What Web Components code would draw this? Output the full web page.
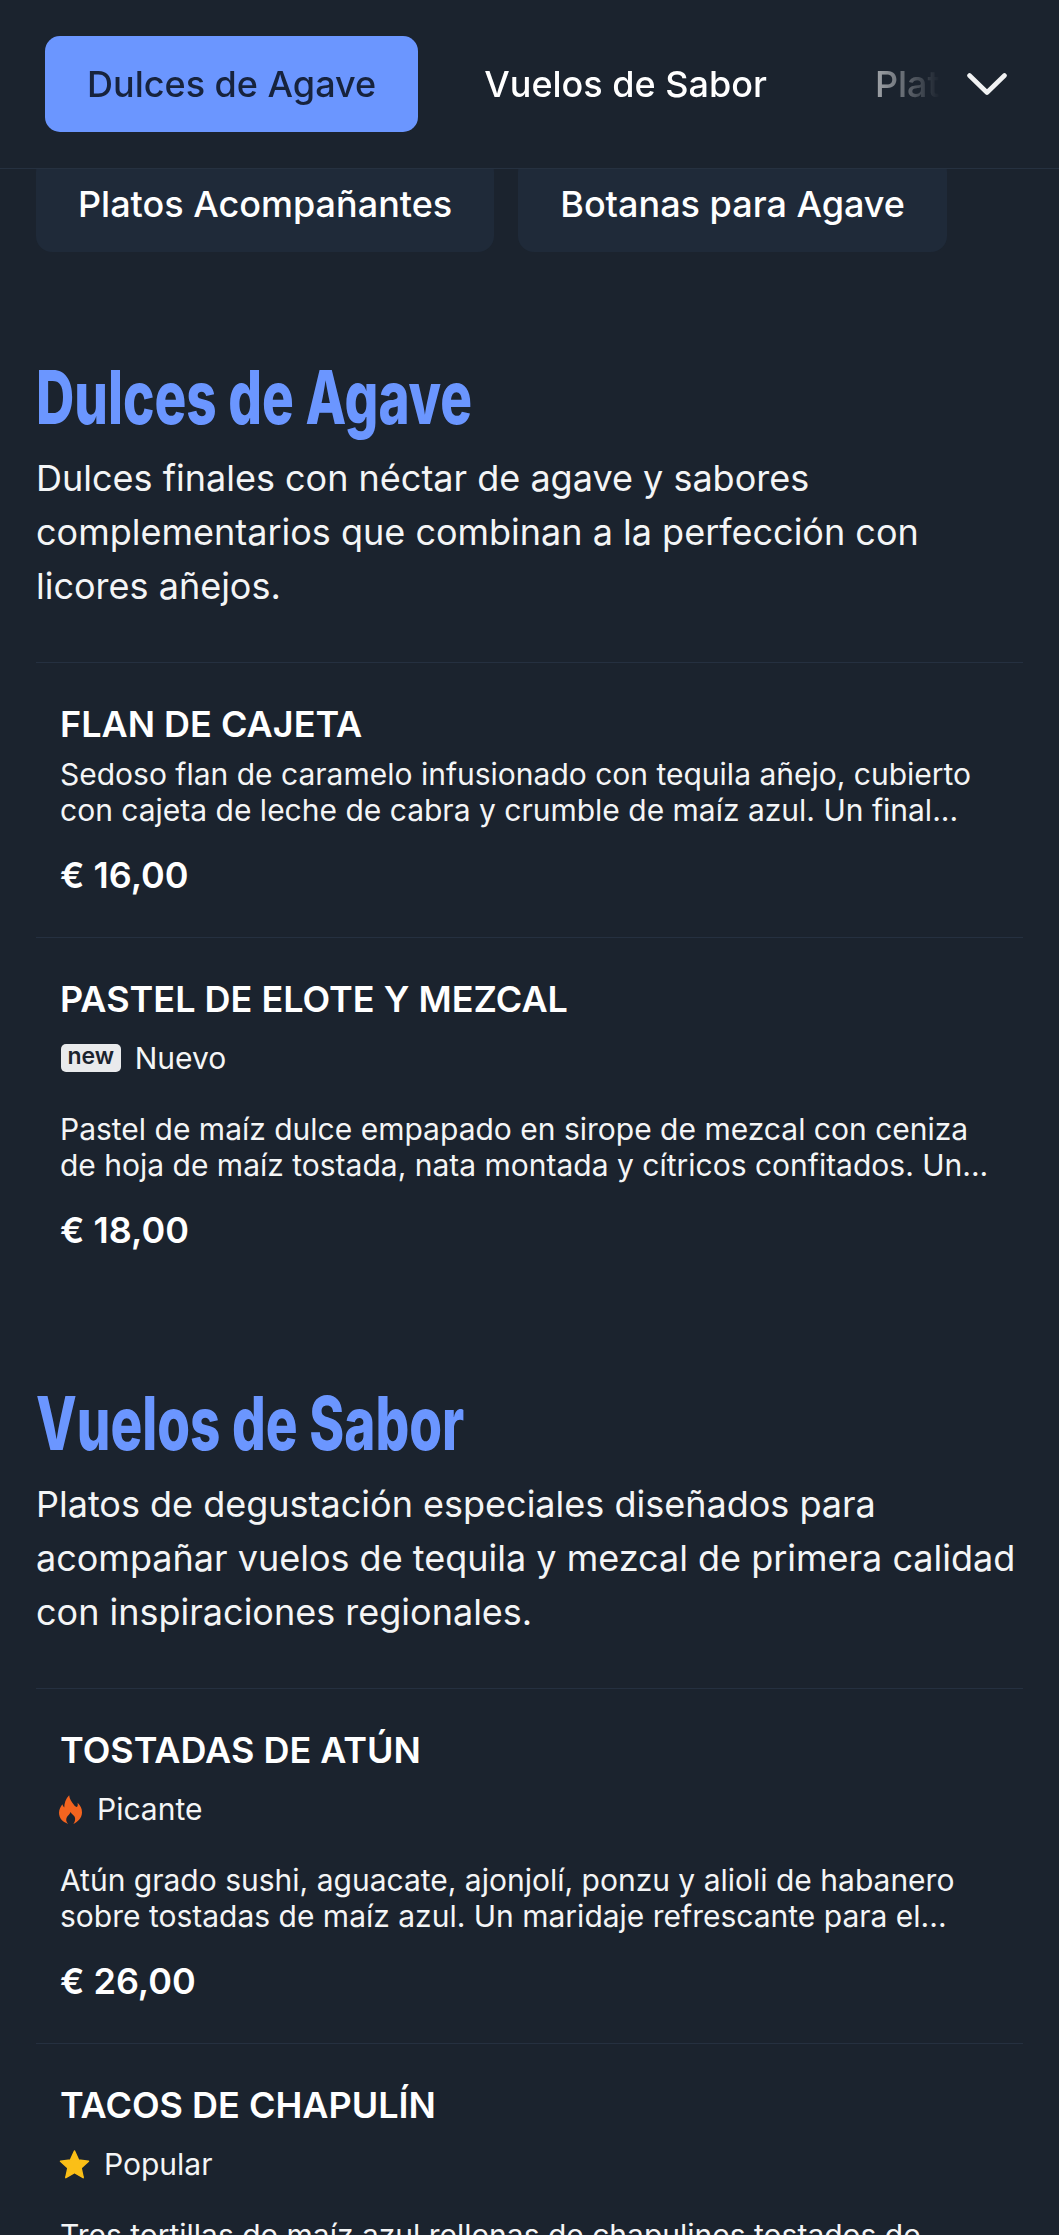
<!DOCTYPE html>
<html lang="es">
<head>
<meta charset="utf-8">
<title>Menu</title>
<style>
  html, body { margin: 0; padding: 0; background: #1b232e; }
  body { height: 2235px; overflow: hidden; font-family: Inter, "Noto Sans", sans-serif; color: #fff; }
</style>
</head>
<body>
<menu-tabs>
  <tab-link active>Dulces de Agave</tab-link>
  <tab-link>Vuelos de Sabor</tab-link>
  <tab-link>Platos Acompañantes</tab-link>
</menu-tabs>
<menu-chips>
  <menu-chip>Platos Acompañantes</menu-chip>
  <menu-chip>Botanas para Agave</menu-chip>
</menu-chips>
<menu-section heading="Dulces de Agave" description="Dulces finales con néctar de agave y sabores complementarios que combinan a la perfección con licores añejos.">
  <menu-item name="FLAN DE CAJETA" price="€ 16,00" text="Sedoso flan de caramelo infusionado con tequila añejo, cubierto con cajeta de leche de cabra y crumble de maíz azul. Un final..."></menu-item>
  <menu-item name="PASTEL DE ELOTE Y MEZCAL" price="€ 18,00" text="Pastel de maíz dulce empapado en sirope de mezcal con ceniza de hoja de maíz tostada, nata montada y cítricos confitados. Un...">
    <item-tag kind="new">Nuevo</item-tag>
  </menu-item>
</menu-section>
<menu-section heading="Vuelos de Sabor" description="Platos de degustación especiales diseñados para acompañar vuelos de tequila y mezcal de primera calidad con inspiraciones regionales.">
  <menu-item name="TOSTADAS DE ATÚN" price="€ 26,00" text="Atún grado sushi, aguacate, ajonjolí, ponzu y alioli de habanero sobre tostadas de maíz azul. Un maridaje refrescante para el...">
    <item-tag kind="hot">Picante</item-tag>
  </menu-item>
  <menu-item name="TACOS DE CHAPULÍN" text="Tres tortillas de maíz azul rellenas de chapulines tostados de">
    <item-tag kind="star">Popular</item-tag>
  </menu-item>
</menu-section>

<script>
const tabsTemplate = document.createElement('template')
tabsTemplate.innerHTML = `
<style>
  :host { display: flex; align-items: center; height: 168px; border-bottom: 1px solid #263140; box-sizing: content-box; }
  .scroller { flex: 1; display: flex; gap: 24px; padding-left: 45px; overflow: hidden; min-width: 0; white-space: nowrap;
    -webkit-mask-image: linear-gradient(to right, #000 830px, transparent 940px); mask-image: linear-gradient(to right, #000 830px, transparent 940px); }
  .toggle { flex: none; width: 40px; height: 22px; margin-right: 52px; }
  svg { display: block; }
</style>
<div class="scroller"><slot></slot></div>
<div class="toggle">
  <svg width="40" height="22" viewBox="0 0 40 22" fill="none" stroke="#f1f2f3" stroke-width="4.600" stroke-linecap="round" stroke-linejoin="round"><path d="M2.500 2.500 20 19.500 37.500 2.500"/></svg>
</div>`
class MenuTabs extends HTMLElement {
  constructor () {
    super()
    this.attachShadow({ mode: 'open' }).appendChild(tabsTemplate.content.cloneNode(true))
  }
}
customElements.define('menu-tabs', MenuTabs)

const tabTemplate = document.createElement('template')
tabTemplate.innerHTML = `
<style>
  :host { display: flex; flex: none; align-items: center; height: 96px; padding: 0 42px; border-radius: 15px; font: 500 36px/1 Inter, sans-serif; color: #fff; box-sizing: border-box; }
  :host([active]) { background: #6b96ff; color: #17233d; }
</style>
<slot></slot>`
class TabLink extends HTMLElement {
  constructor () {
    super()
    this.attachShadow({ mode: 'open' }).appendChild(tabTemplate.content.cloneNode(true))
  }
}
customElements.define('tab-link', TabLink)

const chipsTemplate = document.createElement('template')
chipsTemplate.innerHTML = `
<style>
  :host { display: flex; align-items: flex-end; gap: 24px; height: 83px; padding: 0 0 11px 36px; overflow: hidden; }
</style>
<slot></slot>`
class MenuChips extends HTMLElement {
  constructor () {
    super()
    this.attachShadow({ mode: 'open' }).appendChild(chipsTemplate.content.cloneNode(true))
  }
}
customElements.define('menu-chips', MenuChips)

const chipTemplate = document.createElement('template')
chipTemplate.innerHTML = `
<style>
  :host { display: flex; flex: none; align-items: center; height: 96px; padding: 0 42px; background: #1f2a39; border-radius: 16px; font: 500 36px/1 Inter, sans-serif; color: #fff; box-sizing: border-box; }
</style>
<slot></slot>`
class MenuChip extends HTMLElement {
  constructor () {
    super()
    this.attachShadow({ mode: 'open' }).appendChild(chipTemplate.content.cloneNode(true))
  }
}
customElements.define('menu-chip', MenuChip)

const sectionTemplate = document.createElement('template')
sectionTemplate.innerHTML = `
<style>
  :host { display: block; padding: 0 36px; margin-top: 89px; }
  :host(:nth-of-type(n+2)) { margin-top: 86px; }
  h2 { margin: 0; height: 90px; white-space: nowrap; font: 800 74px/90px Inter, sans-serif; color: #6b96ff; transform: scaleX(.716); transform-origin: left center; }
  p { margin: 9px 0 0; font: 400 36px/54px Inter, sans-serif; color: #f4f5f6; }
  .items { margin-top: 49px; display: block; }
</style>
<h2></h2>
<p></p>
<div class="items"><slot></slot></div>`
class MenuSection extends HTMLElement {
  constructor () {
    super()
    this.attachShadow({ mode: 'open' }).appendChild(sectionTemplate.content.cloneNode(true))
    this.shadowRoot.querySelector('h2').textContent = this.getAttribute('heading')
    this.shadowRoot.querySelector('p').textContent = this.getAttribute('description')
  }
}
customElements.define('menu-section', MenuSection)

const itemTemplate = document.createElement('template')
itemTemplate.innerHTML = `
<style>
  :host { display: block; padding: 40px 24px 40px; border-top: 1px solid #253040; }
  h3 { margin: 0; font: 600 36px/43px Inter, sans-serif; color: #fff; }
  .tags { display: flex; margin: 15px 0 31px; }
  .tags.empty { display: block; height: 0; margin: 0 0 10px; }
  p { margin: 0; font: 400 30px/36px Inter, sans-serif; color: #f4f5f6; }
  .price { margin-top: 26px; font: 600 36px/43px Inter, sans-serif; color: #fff; }
</style>
<h3></h3>
<div class="tags"><slot></slot></div>
<p></p>
<div class="price"></div>`
class MenuItem extends HTMLElement {
  constructor () {
    super()
    const root = this.attachShadow({ mode: 'open' })
    root.appendChild(itemTemplate.content.cloneNode(true))
    root.querySelector('h3').textContent = this.getAttribute('name')
    root.querySelector('p').textContent = this.getAttribute('text')
    root.querySelector('.price').textContent = this.getAttribute('price')
  }
  connectedCallback () {
    // items with no tag drop the row
    if (!this.querySelector('item-tag')) this.shadowRoot.querySelector('.tags').classList.add('empty')
  }
}
customElements.define('menu-item', MenuItem)

const tagIcons = {
  new: `<span class="new">new</span>`,
  hot: `<svg width="23" height="29" viewBox="0 0 24 30"><path fill="#f4641f" d="M10.600 0C11 4 13 6.500 15.500 10c1 1.500 2 2 3 2.500 1-.5 1.300-2 .9-4.500C22.500 11 24 14 24 18c0 6-5 10-9 12 2-2.500 2.500-5.500 1-8-1.200-1.800-3-2.500-4-4.500-.7 2.300-2.500 3.300-3.700 5.300C7 25 7.300 28 9.500 30 4.500 28.500 0 24.500 0 18.500 0 14.500 2 12 3.500 9.500c.5 1.500 1 2.500 2 3.300C5.500 8 7 3.500 10.600 0z"/></svg>`,
  star: `<svg width="31" height="31" viewBox="0 0 31 30"><path fill="#fbbf17" stroke="#fbbf17" stroke-width="1.500" stroke-linejoin="round" d="M15.500 1.500l4.100 9.100 9.900 1.100-7.400 6.700 2.100 9.800-8.700-5-8.700 5 2.100-9.800-7.400-6.700 9.900-1.100z"/></svg>`
}
const tagTemplate = document.createElement('template')
tagTemplate.innerHTML = `
<style>
  :host { display: flex; align-items: center; gap: 14px; height: 44px; margin-left: -1px; font: 400 30px/44px Inter, sans-serif; color: #f4f5f6; }
  :host([kind="new"]) { margin-left: 1px; }
  :host([kind="hot"]) { gap: 15px; }
  .icon { display: flex; align-items: center; }
  svg { display: block; }
  .new { display: block; height: 28px; padding: 0 6.500px; background: #e9eaec; border-radius: 5px; font: 600 23px/25px Inter, sans-serif; color: #1b232e; box-sizing: border-box; }
</style>
<span class="icon"></span>
<slot></slot>`
class ItemTag extends HTMLElement {
  constructor () {
    super()
    const root = this.attachShadow({ mode: 'open' })
    root.appendChild(tagTemplate.content.cloneNode(true))
    root.querySelector('.icon').innerHTML = tagIcons[this.getAttribute('kind')]
  }
}
customElements.define('item-tag', ItemTag)
</script>
</body>
</html>
